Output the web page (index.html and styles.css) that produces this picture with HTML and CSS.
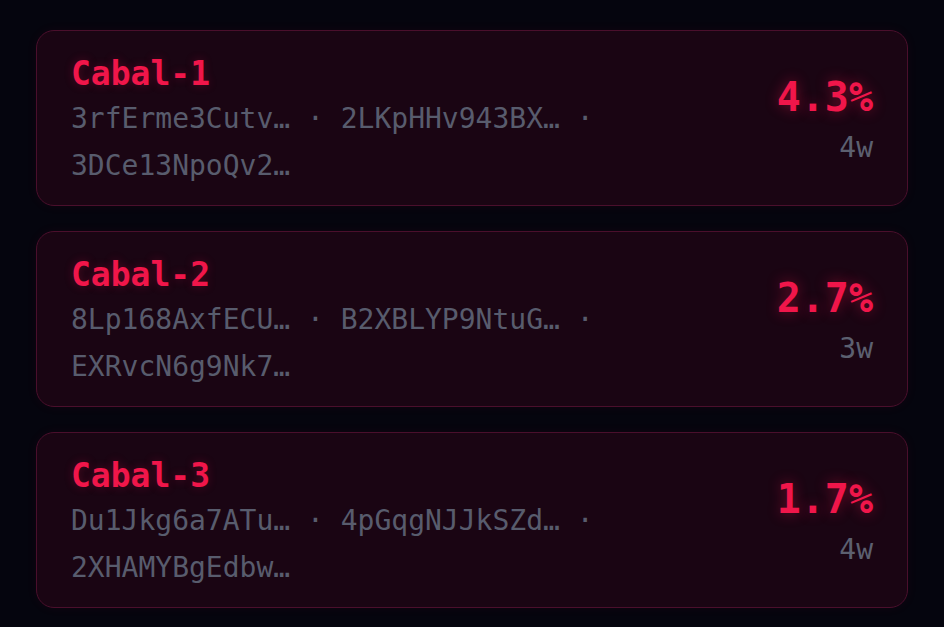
FILE: index.html
```html
<!DOCTYPE html>
<html lang="en">
<head>
    <meta charset="UTF-8">
    <meta name="viewport" content="width=device-width, initial-scale=1.0">
    <title>Cabals</title>
    <link rel="stylesheet" href="styles.css">
</head>
<body>
    <div class="cabal-list">
        <div class="cabal-card">
            <div class="cabal-info">
                <div class="cabal-name">Cabal-1</div>
                <div class="cabal-wallets">3rfErme3Cutv… · 2LKpHHv943BX… · 3DCe13NpoQv2…</div>
            </div>
            <div class="cabal-stats">
                <div class="cabal-pct">4.3%</div>
                <div class="cabal-count">4w</div>
            </div>
        </div>
        <div class="cabal-card">
            <div class="cabal-info">
                <div class="cabal-name">Cabal-2</div>
                <div class="cabal-wallets">8Lp168AxfECU… · B2XBLYP9NtuG… · EXRvcN6g9Nk7…</div>
            </div>
            <div class="cabal-stats">
                <div class="cabal-pct">2.7%</div>
                <div class="cabal-count">3w</div>
            </div>
        </div>
        <div class="cabal-card">
            <div class="cabal-info">
                <div class="cabal-name">Cabal-3</div>
                <div class="cabal-wallets">Du1Jkg6a7ATu… · 4pGqgNJJkSZd… · 2XHAMYBgEdbw…</div>
            </div>
            <div class="cabal-stats">
                <div class="cabal-pct">1.7%</div>
                <div class="cabal-count">4w</div>
            </div>
        </div>
    </div>
</body>
</html>
```

FILE: styles.css
```css
body {
    margin: 0;
    padding: 30px 36px;
    background-color: #05050e;
    font-family: "DejaVu Sans Mono", "Liberation Mono", monospace;
}
.cabal-list {
    display: flex;
    flex-direction: column;
    gap: 25px;
}
.cabal-card {
    display: flex;
    align-items: center;
    justify-content: space-between;
    gap: 40px;
    padding: 22px 34px 16px;
    border: 1px solid #4a0f2c;
    border-radius: 18px;
    background: #1a0513;
    box-shadow: 0 0 12px rgba(255, 20, 70, 0.05);
}
.cabal-info {
    flex: 1;
    min-width: 0;
}
.cabal-name {
    color: #f0164a;
    font-size: 33px;
    font-weight: bold;
    line-height: 42px;
    text-shadow: 0 0 10px rgba(240, 22, 74, 0.25);
}
.cabal-wallets {
    color: #585c6d;
    font-size: 28px;
    line-height: 47px;
}
.cabal-stats {
    text-align: right;
}
.cabal-pct {
    color: #f0164a;
    font-size: 40px;
    font-weight: bold;
    line-height: 44px;
    text-shadow: 0 0 14px rgba(240, 22, 74, 0.45);
}
.cabal-count {
    margin-top: 9px;
    color: #5c6070;
    font-size: 28px;
    line-height: 40px;
}
```
